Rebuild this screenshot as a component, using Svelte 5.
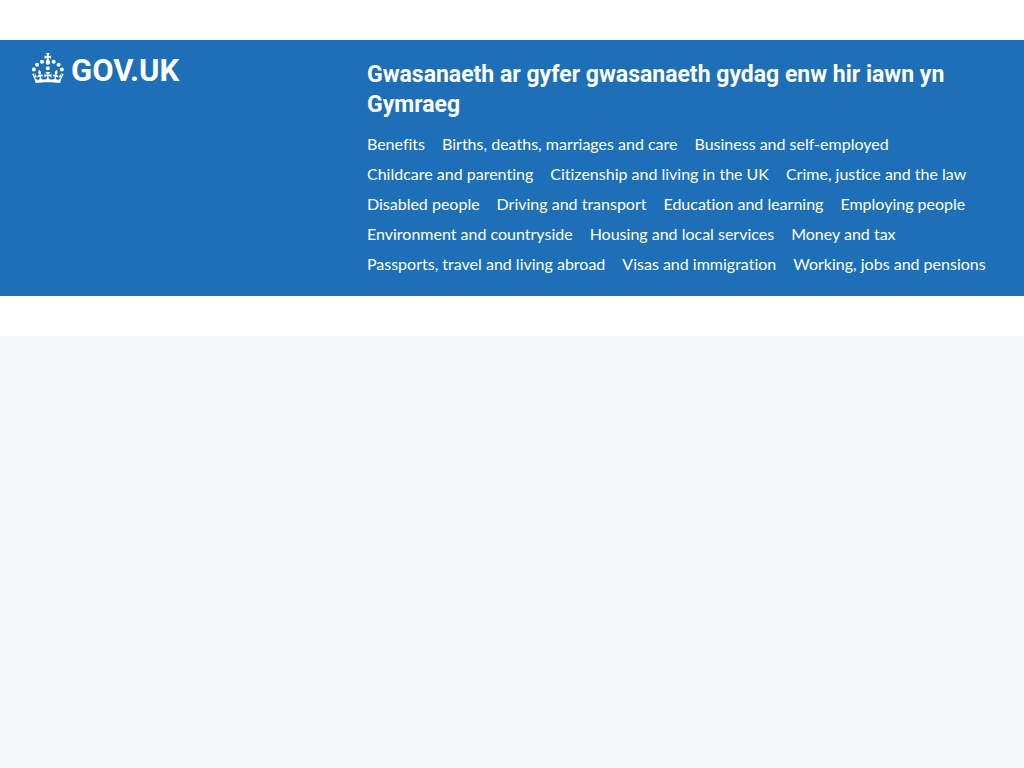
<script>
  const links = [
    'Benefits',
    'Births, deaths, marriages and care',
    'Business and self-employed',
    'Childcare and parenting',
    'Citizenship and living in the UK',
    'Crime, justice and the law',
    'Disabled people',
    'Driving and transport',
    'Education and learning',
    'Employing people',
    'Environment and countryside',
    'Housing and local services',
    'Money and tax',
    'Passports, travel and living abroad',
    'Visas and immigration',
    'Working, jobs and pensions',
  ];
  const jewels = [
    [20, 17.6],
    [10.2, 23.5],
    [3.7, 33.2],
    [31.7, 30.6],
    [43.3, 17.6],
    [53.2, 23.5],
    [59.7, 33.2],
  ];
</script>

<div class="preview">
  <header>
    <div class="container">
      <div class="brand">
        <a class="logo" href="#home" aria-label="GOV.UK">
          <svg viewBox="0 0 64 60" width="32" height="30" fill="currentColor" aria-hidden="true">
            {#each jewels as [cx, cy]}
              <circle {cx} {cy} r="4" />
            {/each}
            <path d="M33.1,9.8c.2-.1.3-.3.5-.5l4.6,2.4v-6.8l-4.6,1.5c-.1-.2-.3-.3-.5-.5l1.9-5.9h-6.7l1.9,5.9c-.2.1-.3.3-.5.5l-4.6-1.5v6.8l4.6-2.4c.1.2.3.3.5.5l-2.6,8c-.9,2.8,1.2,5.7,4.1,5.7h0c3,0,5.1-2.9,4.1-5.7l-2.6-8ZM37,37.9s-3.4,3.8-4.1,6.1c2.2,0,4.2-.5,6.4-2.8l-.7,8.5c-2-2.8-4.4-4.1-5.7-3.8.1,3.1.5,6.7,5.8,7.2,3.7.3,6.7-1.5,7-3.8.4-2.6-2-4.3-3.7-1.6-1.4-4.5,2.4-6.1,4.9-3.2-1.9-4.5-1.8-7.7,2.4-10.9,3,4,2.6,7.3-1.2,11.1,2.4-1.3,6.2,0,4,4.6-1.2-2.8-3.7-2.2-4.2.2-.3,1.7.7,3.7,3,4.2,1.9.3,4.7-.9,7-5.9-1.3,0-2.4.7-3.9,1.7l2.4-8c.6,2.3,1.4,3.7,2.2,4.5.6-1.6.5-2.8,0-5.3l5,1.8c-2.6,3.6-5.2,8.7-7.3,17.5-7.4-1.1-15.7-1.7-24.5-1.7h0c-8.8,0-17.1.6-24.5,1.7-2.1-8.9-4.7-13.9-7.3-17.5l5-1.8c-.5,2.5-.6,3.7,0,5.3.8-.8,1.6-2.3,2.2-4.5l2.4,8c-1.5-1-2.6-1.7-3.9-1.7,2.3,5,5.2,6.2,7,5.9,2.3-.4,3.3-2.4,3-4.2-.5-2.4-3-3.1-4.2-.2-2.2-4.6,1.6-6,4-4.6-3.7-3.7-4.2-7.1-1.2-11.1,4.2,3.2,4.3,6.4,2.4,10.9,2.5-2.8,6.3-1.3,4.9,3.2-1.8-2.7-4.1-1-3.7,1.6.3,2.3,3.3,4.1,7,3.8,5.4-.5,5.7-4.2,5.8-7.2-1.3-.2-3.7,1-5.7,3.8l-.7-8.5c2.2,2.3,4.2,2.7,6.4,2.8-.7-2.3-4.1-6.1-4.1-6.1h10.6Z" />
          </svg>
          <span>GOV.UK</span>
        </a>
      </div>
      <div class="content">
        <a class="service" href="#service">Gwasanaeth ar gyfer gwasanaeth gydag enw hir iawn yn Gymraeg</a>
        <nav aria-label="Menu">
          <ul>
            {#each links as label, i}
              <li><a href="#{i + 1}">{label}</a></li>
            {/each}
          </ul>
        </nav>
      </div>
    </div>
  </header>
</div>

<style>
  :global(body) {
    margin: 0;
    background: #f4f8fb;
    font-family: Lato, 'Liberation Sans', sans-serif;
    font-variant-ligatures: none;
  }

  .preview {
    padding: 40px 0;
    background: #fff;
  }

  header {
    background: #1d70b8;
    color: #fff;
  }

  a {
    color: inherit;
    text-decoration: none;
  }

  a:hover {
    text-decoration: underline;
  }

  .container {
    display: flex;
    max-width: 960px;
    margin: 0 auto;
  }

  .brand {
    flex: none;
    width: 33.33%;
    padding: 13px 15px 0 0;
  }

  .logo {
    display: inline-flex;
    align-items: center;
    gap: 7px;
    font-family: Roboto, 'Liberation Sans', sans-serif;
    font-size: 31px;
    font-weight: 700;
    line-height: 36px;
  }

  .logo svg {
    align-self: flex-start;
  }

  .content {
    flex: 1;
    min-width: 0;
    padding: 20px 0 17px;
  }

  .service {
    display: block;
    font-family: Roboto, 'Liberation Sans', sans-serif;
    font-size: 23px;
    font-weight: 700;
    line-height: 30px;
  }

  ul {
    display: flex;
    flex-wrap: wrap;
    column-gap: 17px;
    margin: 9px 0 0;
    padding: 0;
    list-style: none;
  }

  li {
    font-size: 16px;
    line-height: 30px;
  }
</style>
